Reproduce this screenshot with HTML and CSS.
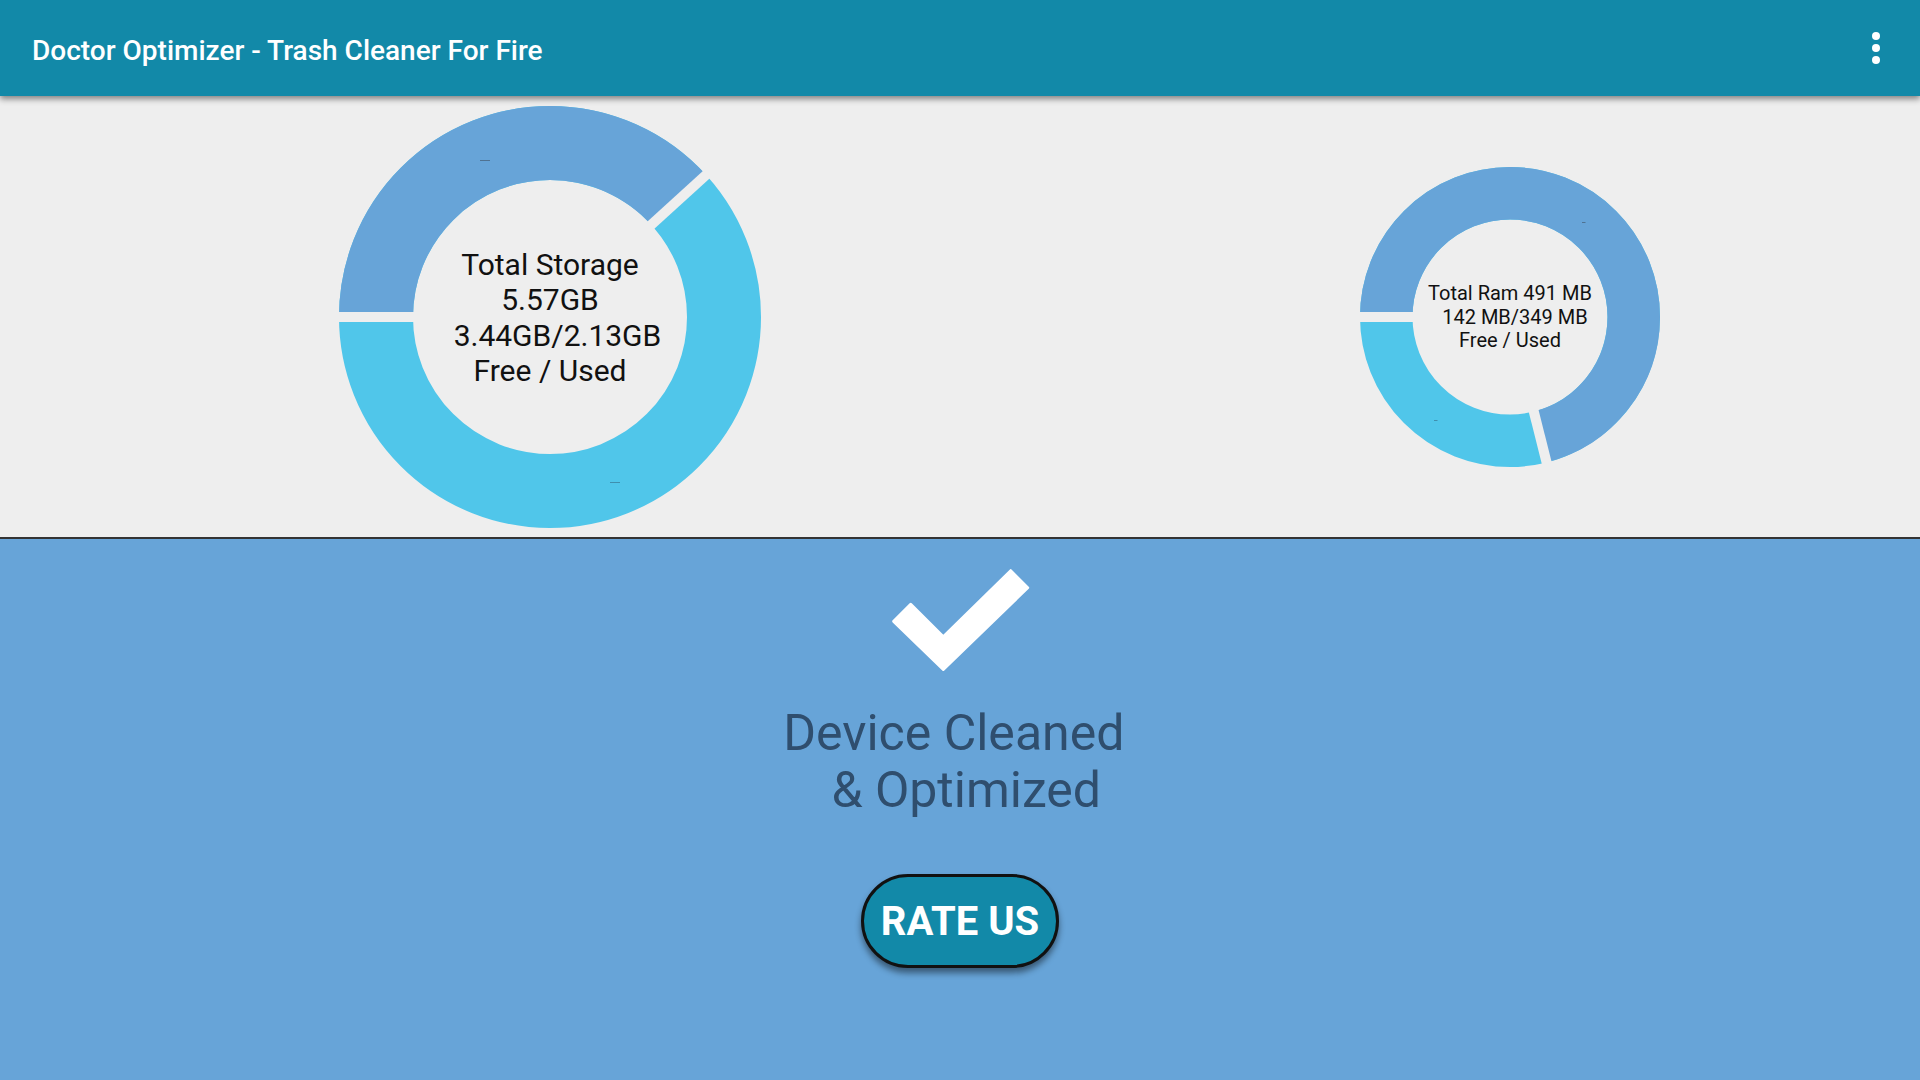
FILE: index.html
```
<!DOCTYPE html>
<html lang="en">
<head>
<meta charset="utf-8">
<title>Doctor Optimizer - Trash Cleaner For Fire</title>
<link rel="stylesheet" href="styles.css">
</head>
<body>
<header class="appbar">
  <h1 class="title">Doctor Optimizer - Trash Cleaner For Fire</h1>
  <button class="menu" aria-label="More options">
    <svg width="48" height="48" viewBox="0 0 24 24"><circle cx="12" cy="6" r="2" fill="#fff"/><circle cx="12" cy="12" r="2" fill="#fff"/><circle cx="12" cy="18" r="2" fill="#fff"/></svg>
  </button>
</header>
<section class="stats">
  <div class="chart">
    <svg class="donut" width="422" height="422" viewBox="0 0 422 422">
      <circle cx="211" cy="211" r="174" fill="none" stroke="#50c6ea" stroke-width="74"/>
      <circle cx="211" cy="211" r="174" fill="none" stroke="#67a4d8" stroke-width="74" stroke-dasharray="418.08 2000" transform="rotate(180 211 211)"/>
      <line x1="211" y1="211" x2="-4" y2="211" stroke="#eeeeee" stroke-width="10"/>
      <line x1="211" y1="211" x2="370" y2="66.2" stroke="#eeeeee" stroke-width="10"/>
      <rect x="141" y="54" width="10" height="1" fill="#4f7292"/>
      <rect x="271" y="376" width="10" height="1" fill="#3f8fae"/>
    </svg>
    <div class="label label-lg"><span>Total Storage</span><span>5.57GB</span><span>  3.44GB/2.13GB</span><span>Free / Used</span></div>
  </div>
  <div class="chart">
    <svg class="donut" width="300" height="300" viewBox="0 0 300 300">
      <circle cx="150" cy="150" r="123.75" fill="none" stroke="#50c6ea" stroke-width="52.5"/>
      <circle cx="150" cy="150" r="123.75" fill="none" stroke="#67a4d8" stroke-width="52.5" stroke-dasharray="552.67 2000" transform="rotate(180 150 150)"/>
      <line x1="150" y1="150" x2="-4" y2="150" stroke="#eeeeee" stroke-width="10"/>
      <line x1="150" y1="150" x2="188" y2="301" stroke="#eeeeee" stroke-width="10"/>
      <rect x="222" y="55" width="3.5" height="1" fill="#4f7292"/>
      <rect x="74" y="253" width="3.5" height="1" fill="#3f8fae"/>
    </svg>
    <div class="label label-sm"><span>Total Ram 491 MB</span><span>  142 MB/349 MB</span><span>Free / Used</span></div>
  </div>
</section>
<section class="result">
  <svg class="check" width="140" height="110" viewBox="0 0 140 110">
    <polygon points="3.7,54.3 20.7,37.3 53.3,69.8 120.7,3.7 137.7,20.7 53.3,102.3" fill="#fff" stroke="#fff" stroke-width="3" stroke-linejoin="round"/>
  </svg>
  <p class="status">Device Cleaned 
 &amp; Optimized</p>
  <button class="rate">RATE US</button>
</section>
</body>
</html>
```
FILE: styles.css
```
* { box-sizing: border-box; }
html, body { margin: 0; padding: 0; }
body {
  width: 1920px;
  height: 1080px;
  overflow: hidden;
  font-family: Roboto, "Liberation Sans", sans-serif;
  background: #67a4d8;
}
.appbar {
  position: relative;
  z-index: 2;
  height: 96px;
  background: #1289a8;
  display: flex;
  align-items: center;
  justify-content: space-between;
  padding: 0 20px 0 32px;
  box-shadow: 0 3px 6px rgba(0,0,0,0.45);
}
.title {
  margin: 0;
  padding-top: 5px;
  font-size: 28px;
  font-weight: 500;
  color: #ffffff;
  line-height: 1;
}
.menu {
  width: 48px;
  height: 48px;
  padding: 0;
  border: 0;
  background: none;
  display: flex;
}
.stats {
  height: 443px;
  background: #eeeeee;
  border-bottom: 2px solid #333333;
  display: flex;
  align-items: center;
  padding-left: 339px;
  gap: 599px;
}
.chart {
  display: grid;
  place-items: center;
}
.chart > * { grid-area: 1 / 1; }
.donut { display: block; }
.label {
  display: flex;
  flex-direction: column;
  align-items: center;
  white-space: pre;
  color: #111111;
  font-weight: 400;
}
.label-lg { font-size: 30px; line-height: 35.2px; padding-top: 2px; }
.label-sm { font-size: 20px; line-height: 23.5px; padding-top: 2px; }
.result {
  height: 541px;
  background: #67a4d8;
  display: flex;
  flex-direction: column;
  align-items: center;
}
.check {
  display: block;
  margin-top: 28px;
}
.status {
  margin: 28px 0 0;
  white-space: pre;
  text-align: center;
  font-size: 50px;
  line-height: 57px;
  font-weight: 400;
  color: #2f4e6e;
}
.rate {
  margin-top: 55px;
  width: 198px;
  height: 94px;
  border: 3px solid #111111;
  border-radius: 47px;
  background: #1289a8;
  color: #ffffff;
  font-family: Roboto, "Liberation Sans", sans-serif;
  font-weight: 700;
  font-size: 40px;
  display: flex;
  align-items: center;
  justify-content: center;
  padding: 0;
  box-shadow: 0 5px 6px rgba(0,0,0,0.45);
}
```
